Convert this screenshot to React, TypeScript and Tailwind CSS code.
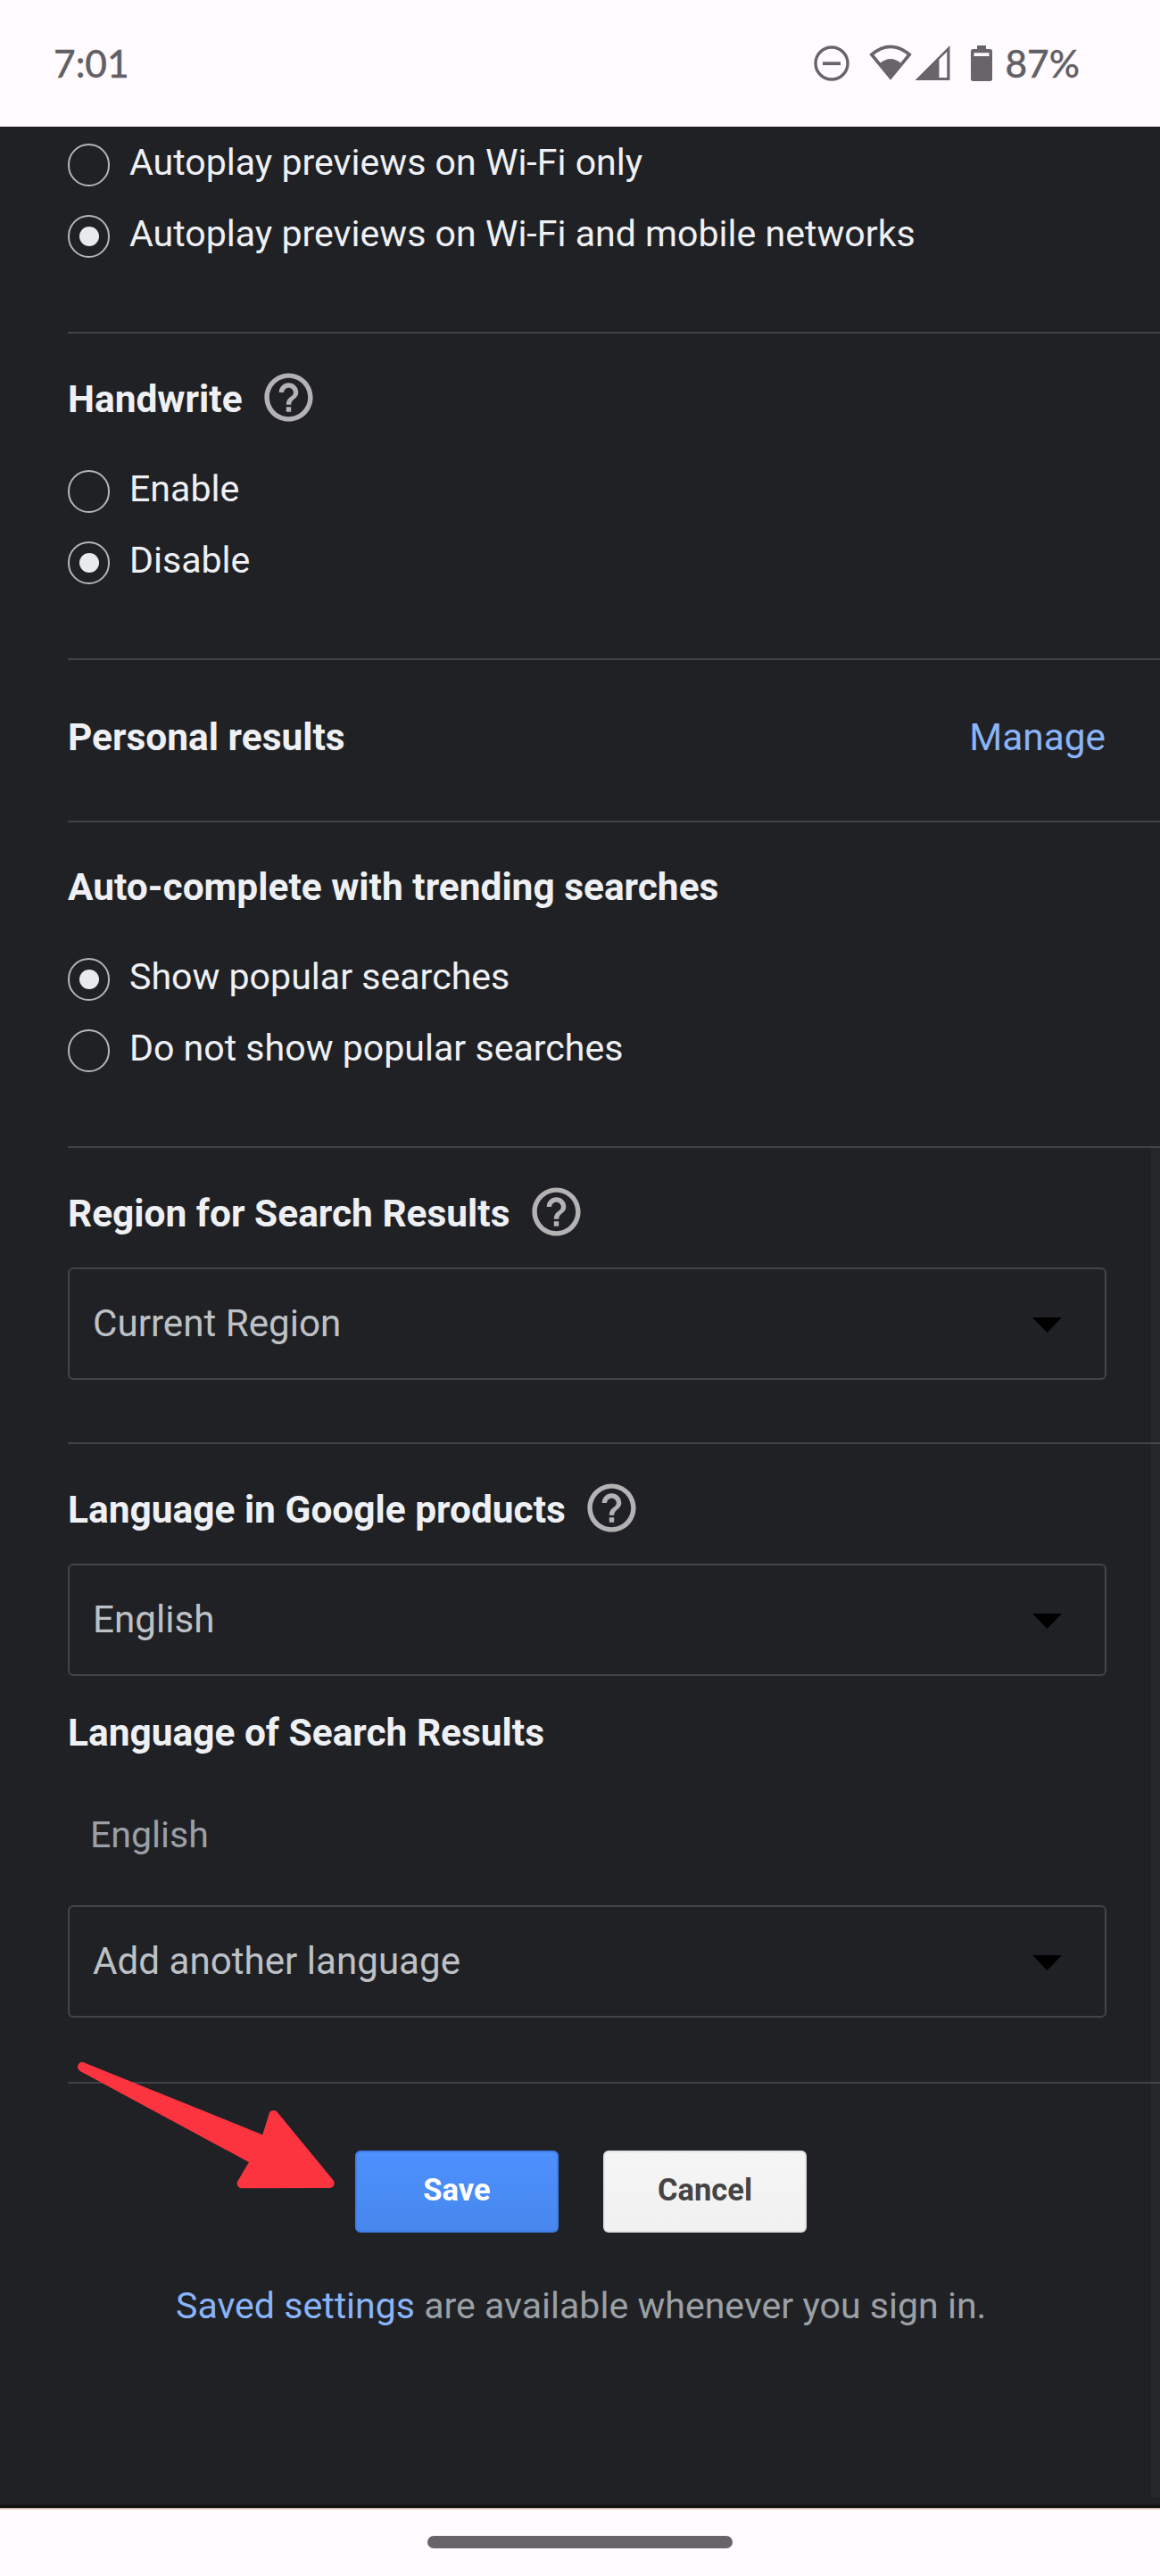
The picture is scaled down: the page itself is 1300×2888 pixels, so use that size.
import type { ReactNode } from "react";

function StatusIcons() {
  return (
    <div className="flex h-[42px] items-start text-[#68656a]">
      <svg width="42" height="42" viewBox="0 0 42 42" fill="none" stroke="currentColor" strokeWidth="3.4">
        <circle cx="21" cy="21" r="18" />
        <path d="M11 21.2H31" strokeWidth="3.8" />
      </svg>
      <svg className="ml-[20px]" width="50" height="42" viewBox="0 0 50 42">
        <path
          d="M3.8 11.2Q25 -6.5 46.2 11.2L25 37Z"
          fill="none"
          stroke="currentColor"
          strokeWidth="3.6"
          strokeLinejoin="miter"
        />
        <path d="M12.5 21.5Q25 10.5 37.5 21.5L25 38.5Z" fill="currentColor" />
      </svg>
      <svg className="ml-[2px]" width="40" height="42" viewBox="0 0 40 42" fill="currentColor">
        <path fillRule="evenodd" d="M0.5 40L39.5 1V40ZM27.5 16.5V37H36.3V8Z" />
      </svg>
      <svg className="ml-[22px]" width="26" height="42" viewBox="0 0 26 42" fill="currentColor">
        <path
          fillRule="evenodd"
          d="M8 1H18V5H22.5Q25 5 25 7.500V38.500Q25 41 22.5 41H3.500Q1 41 1 38.500V7.500Q1 5 3.500 5H8ZM4.500 9.300V13H21.500V9.300Z"
        />
      </svg>
    </div>
  );
}

function HelpIcon() {
  return (
    <svg className="-mt-[6px] ml-[19px] shrink-0 text-[#b3b3b3]" width="65" height="65" viewBox="0 0 24 24" fill="currentColor">
      <path d="M11 18h2v-2h-2v2zm1-16C6.480 2 2 6.480 2 12s4.480 10 10 10 10-4.480 10-10S17.520 2 12 2zm0 18c-4.410 0-8-3.590-8-8s3.590-8 8-8 8 3.590 8 8-3.590 8-8 8zm0-14c-2.210 0-4 1.790-4 4h2c0-1.100.9-2 2-2s2 .9 2 2c0 2-3 1.750-3 5h2c0-2.250 3-2.500 3-5 0-2.210-1.790-4-4-4z" />
    </svg>
  );
}

function Heading({ children, help }: { children: ReactNode; help?: boolean }) {
  return (
    <div className="flex h-[60px] items-center">
      <h2 className="text-[42.450px] leading-[60px] font-bold whitespace-nowrap text-[#eef0f4]">{children}</h2>
      {help && <HelpIcon />}
    </div>
  );
}

function Radio({ label, checked }: { label: string; checked?: boolean }) {
  return (
    <div className="flex h-[80px] items-center gap-[22px]">
      <span className="flex h-[48px] w-[47px] shrink-0 items-center justify-center rounded-full border-2 border-[#b4b5b8]">
        {checked && <span className="size-[22px] rounded-full bg-[#e8eaed]" />}
      </span>
      <span className="mb-[7px] text-[41.100px] leading-[60px] whitespace-nowrap text-[#eef0f4]">{label}</span>
    </div>
  );
}

function Select({ value }: { value: string }) {
  return (
    <div className="flex h-[126px] w-[1164px] items-center justify-between rounded-[6px] border-2 border-[#424448] pr-[48px] pl-[26px]">
      <span className="text-[42.150px] leading-[60px] text-[#bdc1c6]">{value}</span>
      <svg width="33" height="17" viewBox="0 0 33 17" className="mt-[2px]">
        <path d="M0 0H33L16.500 17Z" fill="#000" />
      </svg>
    </div>
  );
}

function Section({ children, className }: { children: ReactNode; className: string }) {
  return <section className={`border-t-2 border-[#404246] ${className}`}>{children}</section>;
}

export default function App() {
  return (
    <div className="flex h-[2888px] w-[1300px] flex-col overflow-hidden bg-[#fffbff] font-['Roboto',sans-serif]">
      <header className="flex h-[142px] shrink-0 items-start justify-between pt-[50px] pr-[90px] pl-[60px] font-['Lato',sans-serif] text-[42.500px] font-medium text-[#626065] [-webkit-text-stroke:0.300px_#626065]">
        <span className="-mt-px leading-[44px]">7:01</span>
        <div className="flex">
          <StatusIcons />
          <span className="-mt-px ml-[13px] leading-[44px]">87%</span>
        </div>
      </header>

      <main className="relative h-[2670px] shrink-0 overflow-hidden border-b-4 border-[#161314] bg-[#202124] pl-[76px]">
        <div className="h-[230px] pt-[3px]">
          <Radio label="Autoplay previews on Wi-Fi only" />
          <Radio label="Autoplay previews on Wi-Fi and mobile networks" checked />
        </div>

        <Section className="h-[366px] pt-[44px]">
          <Heading help>Handwrite</Heading>
          <div className="mt-[33px]">
            <Radio label="Enable" />
            <Radio label="Disable" checked />
          </div>
        </Section>

        <Section className="flex h-[182px] items-center justify-between pr-[61px] pb-[6px]">
          <Heading>Personal results</Heading>
          <a className="text-[42.400px] leading-[60px] text-[#8ab4f8]">Manage</a>
        </Section>

        <Section className="h-[365px] pt-[43px]">
          <Heading>Auto-complete with trending searches</Heading>
          <div className="mt-[33px]">
            <Radio label="Show popular searches" checked />
            <Radio label="Do not show popular searches" />
          </div>
        </Section>

        <Section className="h-[332px] pt-[44px]">
          <Heading help>Region for Search Results</Heading>
          <div className="mt-[30px]">
            <Select value="Current Region" />
          </div>
        </Section>

        <Section className="h-[717px] pt-[44px]">
          <Heading help>Language in Google products</Heading>
          <div className="mt-[30px] mb-[34px]">
            <Select value="English" />
          </div>
          <Heading>Language of Search Results</Heading>
          <p className="mt-[54px] mb-[49px] pl-[25px] text-[41.100px] leading-[60px] text-[#9aa0a6]">English</p>
          <Select value="Add another language" />
        </Section>

        <Section className="relative pt-[75px]">
          <div className="flex gap-[50px] pl-[322px]">
            <button className="h-[92px] w-[228px] rounded-[6px] border-2 border-[#3f7ee8] bg-linear-to-b from-[#4d90fe] to-[#4787ed] pb-[3px] text-[34.500px] font-bold text-white">
              Save
            </button>
            <button className="h-[92px] w-[228px] rounded-[6px] border-2 border-[#e2e2e4] bg-linear-to-b from-[#f5f5f5] to-[#f1f1f1] pb-[3px] text-[34.500px] font-bold text-[#444]">
              Cancel
            </button>
          </div>
          <p className="mt-[52px] pl-[121px] text-[41.080px] leading-[60px] whitespace-nowrap text-[#9aa0a6]">
            <a className="text-[#8ab4f8]">Saved settings</a> are available whenever you sign in.
          </p>
          <svg className="absolute -top-[46px] -left-[16px]" width="340" height="180" viewBox="0 0 1020 540">
            <path
              d="M97 82L713 331L740 244L928 473L633 474L679 396Z"
              fill="#fb3440"
              stroke="#fb3440"
              strokeWidth="32"
              strokeLinejoin="round"
            />
          </svg>
        </Section>

        <div className="absolute top-[1144px] right-0 bottom-[8px] w-[10px] bg-white/[0.025]" />
      </main>

      <footer className="flex flex-1 justify-center border-t-2 border-[#f6e0d8] pt-[29px]">
        <div className="h-[14px] w-[342px] rounded-full bg-[#68656a]" />
      </footer>
    </div>
  );
}
